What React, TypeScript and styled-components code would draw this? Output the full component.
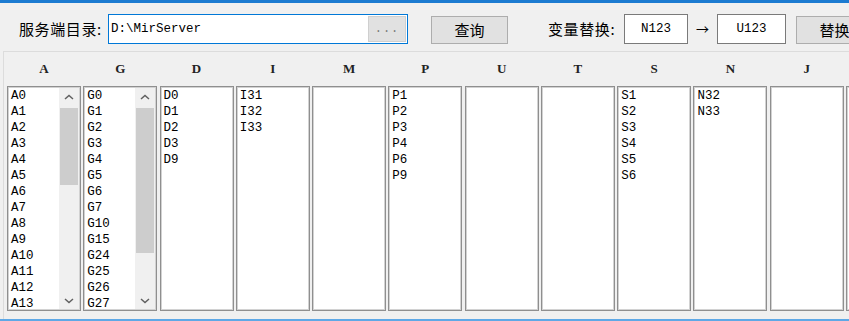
import React from "react";
import styled, { createGlobalStyle } from "styled-components";

const GlobalStyle = createGlobalStyle`
	html, body {
		margin: 0;
		padding: 0;
		background: #f0f0f0;
		overflow: hidden;
	}
`;

const cjk = `"Noto Sans CJK SC", "Microsoft YaHei", sans-serif`;
const mono = `"Liberation Mono", "DejaVu Sans Mono", monospace`;

const Window = styled.div`
	width: 849px;
	height: 321px;
	box-sizing: border-box;
	border-top: 3px solid #1c7bd1;
	border-bottom: 2px solid #5ea8e6;
	background: #f0f0f0;
	display: flex;
	flex-direction: column;
	overflow: hidden;
`;

const Toolbar = styled.div`
	height: 48px;
	flex-shrink: 0;
	box-sizing: border-box;
	padding: 3px 0 0 19px;
	display: flex;
	align-items: center;
	white-space: nowrap;

	& > * {
		flex-shrink: 0;
	}
`;

const Label = styled.span<{ $gap?: number; $width: number }>`
	width: ${(p) => p.$width}px;
	font-family: ${cjk};
	font-size: 15px;
	letter-spacing: 0.6px;
	color: #000;
	margin-left: ${(p) => p.$gap || 0}px;
`;

const PathBox = styled.div`
	width: 300px;
	height: 30px;
	box-sizing: border-box;
	border: 1px solid #0078d7;
	background: #fff;
	display: flex;
	align-items: center;
`;

const PathText = styled.span`
	flex: 1;
	padding-left: 2px;
	font-family: ${mono};
	font-size: 12.5px;
	color: #000;
`;

const BrowseButton = styled.div`
	width: 38px;
	height: 26px;
	margin-right: 1px;
	box-sizing: border-box;
	border: 1px solid #cfcfcf;
	background: #e1e1e1;
	color: #7a7a7a;
	font-family: ${mono};
	font-size: 12px;
	display: flex;
	align-items: center;
	justify-content: center;
	letter-spacing: 1px;
`;

const Button = styled.div<{ $gap: number }>`
	width: 77px;
	height: 28px;
	margin-left: ${(p) => p.$gap}px;
	margin-top: 2px;
	box-sizing: border-box;
	border: 1px solid #adadad;
	background: #e1e1e1;
	font-family: ${cjk};
	font-size: 15px;
	color: #000;
	display: flex;
	align-items: center;
	justify-content: center;
`;

const Field = styled.div<{ $width: number; $gap: number }>`
	width: ${(p) => p.$width}px;
	height: 30px;
	margin-left: ${(p) => p.$gap}px;
	box-sizing: border-box;
	border: 1px solid #7a7a7a;
	background: #fff;
	font-family: ${mono};
	font-size: 12.5px;
	color: #000;
	display: flex;
	align-items: center;
	justify-content: center;
`;

const Arrow = styled.span`
	width: 29px;
	text-align: center;
	font-family: ${cjk};
	font-size: 13px;
	color: #000;
`;

const Panel = styled.div`
	flex: 1;
	margin-left: 3px;
	border-top: 1px solid #dcdcdc;
	border-left: 1px solid #dcdcdc;
	padding-left: 3px;
	overflow: hidden;
`;

const Columns = styled.div`
	display: grid;
	grid-template-columns: repeat(12, 74px);
	column-gap: 2.27px;
`;

const Column = styled.div`
	display: flex;
	flex-direction: column;
`;

const Header = styled.div`
	height: 34px;
	display: flex;
	align-items: center;
	justify-content: center;
	font-family: "Liberation Serif", serif;
	font-weight: bold;
	font-size: 13px;
	color: #222;
`;

const List = styled.div`
	height: 225px;
	box-sizing: border-box;
	border: 1px solid #8f8f8f;
	box-shadow: inset 0 0 0 1px #d2d2d2;
	background: #fff;
	display: flex;
	overflow: hidden;
`;

const Items = styled.div`
	flex: 1;
	padding: 0 0 0 3px;
	margin-top: 1px;
	overflow: hidden;
`;

const Item = styled.div`
	font-family: ${mono};
	font-size: 12.5px;
	line-height: 16px;
	height: 16px;
	color: #000;
	white-space: nowrap;
`;

const Scrollbar = styled.div`
	width: 20px;
	margin: 1px 1px 1px 0;
	background: #f0f0f0;
	display: flex;
	flex-direction: column;
`;

const ScrollArrow = styled.div`
	height: 17px;
	display: flex;
	align-items: center;
	justify-content: center;
	flex-shrink: 0;
`;

const Track = styled.div`
	flex: 1;
	padding-top: 3px;
`;

const Thumb = styled.div<{ $height: number }>`
	height: ${(p) => p.$height}px;
	margin: 0 1px;
	background: #cdcdcd;
`;

function Chevron({ up }: { up?: boolean }) {
	return (
		<svg width="10" height="6" viewBox="0 0 10 6">
			<polyline
				points={up ? "1,5 5,1.5 9,5" : "1,1 5,4.5 9,1"}
				fill="none"
				stroke="#606060"
				strokeWidth="1.5"
			/>
		</svg>
	);
}

interface Col {
	key: string;
	items: string[];
	thumb?: number;
}

const columns: Col[] = [
	{ key: "A", items: ["A0", "A1", "A2", "A3", "A4", "A5", "A6", "A7", "A8", "A9", "A10", "A11", "A12", "A13"], thumb: 77 },
	{ key: "G", items: ["G0", "G1", "G2", "G3", "G4", "G5", "G6", "G7", "G10", "G15", "G24", "G25", "G26", "G27"], thumb: 145 },
	{ key: "D", items: ["D0", "D1", "D2", "D3", "D9"] },
	{ key: "I", items: ["I31", "I32", "I33"] },
	{ key: "M", items: [] },
	{ key: "P", items: ["P1", "P2", "P3", "P4", "P6", "P9"] },
	{ key: "U", items: [] },
	{ key: "T", items: [] },
	{ key: "S", items: ["S1", "S2", "S3", "S4", "S5", "S6"] },
	{ key: "N", items: ["N32", "N33"] },
	{ key: "J", items: [] },
	{ key: "K", items: [] },
];

export default function App() {
	return (
		<>
			<GlobalStyle />
			<Window>
				<Toolbar>
					<Label $width={89}>服务端目录:</Label>
					<PathBox>
						<PathText>D:\MirServer</PathText>
						<BrowseButton>...</BrowseButton>
					</PathBox>
					<Button $gap={23}>查询</Button>
					<Label $gap={40} $width={76}>变量替换:</Label>
					<Field $width={64} $gap={0}>N123</Field>
					<Arrow>→</Arrow>
					<Field $width={69} $gap={0}>U123</Field>
					<Button $gap={10}>替换</Button>
				</Toolbar>

				<Panel>
					<Columns>
						{columns.map((col) => (
							<Column key={col.key}>
								<Header>{col.key === "K" ? "" : col.key}</Header>
								<List>
									<Items>
										{col.items.map((it) => (
											<Item key={it}>{it}</Item>
										))}
									</Items>
									{col.thumb && (
										<Scrollbar>
											<ScrollArrow><Chevron up /></ScrollArrow>
											<Track>
												<Thumb $height={col.thumb} />
											</Track>
											<ScrollArrow><Chevron /></ScrollArrow>
										</Scrollbar>
									)}
								</List>
							</Column>
						))}
					</Columns>
				</Panel>
			</Window>
		</>
	);
}
